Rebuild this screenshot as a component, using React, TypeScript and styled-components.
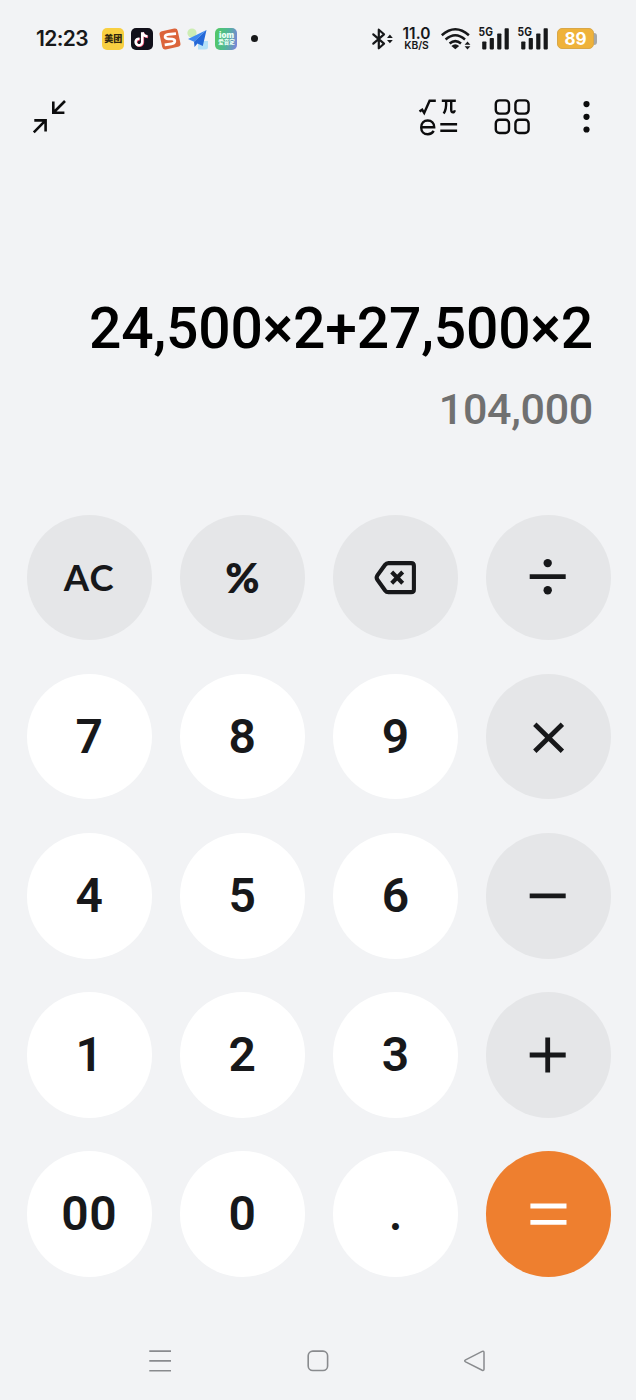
import React from "react";
import styled, { createGlobalStyle } from "styled-components";

const GlobalStyle = createGlobalStyle`
  * { box-sizing: border-box; }
  body { margin: 0; background: #f2f3f5; }
  svg { display: block; flex: none; overflow: visible; }
`;

const Screen = styled.main`
  width: 636px;
  height: 1400px;
  display: flex;
  flex-direction: column;
  background: #f2f3f5;
  color: #17181a;
  font-family: Roboto, "Noto Sans CJK SC", sans-serif;
  overflow: hidden;
`;

const StatusBar = styled.header`
  height: 77px;
  display: flex;
  align-items: center;
  justify-content: space-between;
  padding: 0 39px 0 36px;
`;

const StatusGroup = styled.div<{ $gap: number }>`
  display: flex;
  align-items: center;
  gap: ${(p) => p.$gap}px;
`;

const Clock = styled.span`
  width: 60px;
  font: 600 21px/24px Inter, sans-serif;
  letter-spacing: -0.6px;
  white-space: nowrap;
`;

const AppBadge = styled.span<{ $bg: string }>`
  width: 22px;
  height: 22px;
  border-radius: 5px;
  background: ${(p) => p.$bg};
  display: flex;
  flex-direction: column;
  align-items: center;
  justify-content: center;
`;

const BadgeText = styled.span<{ $size: number; $line: number; $color: string }>`
  font: 900 ${(p) => p.$size}px/${(p) => p.$line}px Inter, "Noto Sans CJK SC", sans-serif;
  color: ${(p) => p.$color};
  white-space: nowrap;
`;

const NoticeDot = styled.span`
  width: 7px;
  height: 7px;
  margin-left: 7px;
  border-radius: 50%;
  background: #17181a;
`;

const NetSpeed = styled.div`
  width: 29px;
  margin: 0 10px 0 9px;
  display: flex;
  flex-direction: column;
  align-items: center;
  white-space: nowrap;
`;

const SpeedValue = styled.span`
  font: 600 15.5px/12px Inter, sans-serif;
  letter-spacing: 0.1px;
`;

const SpeedUnit = styled.span`
  margin-top: 1px;
  font: 600 10.3px/9px Inter, sans-serif;
`;

const SignalWrap = styled.div`
  margin-left: 9px;
`;

const Battery = styled.div`
  margin-left: 9px;
  display: flex;
  align-items: center;
`;

const BatteryBody = styled.div`
  width: 37px;
  height: 21px;
  border-radius: 5px;
  border: 1px solid #d9a748;
  background: #efb23a;
  color: #fff;
  font: 700 17px/21px Inter, sans-serif;
  text-align: center;
`;

const BatteryTip = styled.div`
  width: 3px;
  height: 12px;
  border-radius: 0 4px 4px 0;
  background: #a6a8a8;
`;

const Toolbar = styled.nav`
  height: 80px;
  display: flex;
  align-items: center;
  padding: 0 44px 0 32px;
`;

const ToolButton = styled.button<{ $left?: string }>`
  padding: 0;
  border: 0;
  background: none;
  color: #0c0c0d;
  margin-left: ${(p) => p.$left ?? "0"};
`;

const Display = styled.section`
  height: 358px;
  padding: 137px 43px 0 0;
  display: flex;
  flex-direction: column;
  align-items: flex-end;
  white-space: nowrap;
`;

const Expression = styled.div`
  font-size: 57px;
  font-weight: 500;
  line-height: 70px;
  letter-spacing: -0.15px;
  color: #000;
`;

const Result = styled.div`
  margin-top: 20px;
  font-size: 43px;
  font-weight: 500;
  line-height: 50px;
  letter-spacing: -0.3px;
  color: #707070;
`;

const Keypad = styled.section`
  display: grid;
  grid-template-columns: repeat(4, 125.4px);
  grid-auto-rows: 125.4px;
  column-gap: 27.7px;
  row-gap: 33.7px;
  padding-left: 26.5px;
`;

type Tone = "digit" | "op" | "equals";
const toneFill: Record<Tone, string> = { digit: "#ffffff", op: "#e5e6e8", equals: "#ee7f2f" };

const Key = styled.button<{ $tone: Tone; $face?: string; $size?: number; $weight?: number; $spacing?: number; $lift?: number }>`
  border: 0;
  border-radius: 50%;
  padding: 0 0 ${(p) => p.$lift ?? 0}px;
  display: flex;
  align-items: center;
  justify-content: center;
  background: ${(p) => toneFill[p.$tone]};
  color: ${(p) => (p.$tone === "equals" ? "#fff" : "#17181a")};
  font-family: ${(p) => p.$face ?? "Roboto"}, sans-serif;
  font-size: ${(p) => p.$size ?? 48}px;
  font-weight: ${(p) => p.$weight ?? 600};
  letter-spacing: ${(p) => p.$spacing ?? 0}px;
  line-height: 1;
`;

const NavBar = styled.footer`
  margin-top: 72px;
  display: flex;
  align-items: center;
  justify-content: space-between;
  padding: 0 150px 0 148px;
  color: #898b8e;
`;

const BluetoothIcon = () => (
  <svg width="21" height="22" viewBox="372 27.5 21 22" fill="none" stroke="#17181a">
    <path d="M373.3 33.8 384 43.2 378.8 47.8V29.2L384 33.8 373.3 43.2" strokeWidth="2.2" strokeLinejoin="round" strokeLinecap="round" />
    <path d="M387 37.4 389.9 34 392.8 37.4ZM387 39.4 389.9 42.8 392.8 39.4Z" fill="#17181a" stroke="none" />
  </svg>
);

const WifiIcon = () => (
  <svg width="29" height="22" viewBox="441 27.5 29 22" fill="none" stroke="#17181a" strokeWidth="2.5">
    <path d="M441.8 34.8Q455.3 22.8 468.9 34.8M445.6 39Q455.3 30.6 465 39M449.6 43Q455.3 38.2 461 43" />
    <path d="M451.4 45.4Q455.3 42 459.2 45.4L455.3 48.8Z" fill="#17181a" stroke="none" />
    <path d="M464.6 44.2 467.5 41 470.4 44.2ZM464.6 45.8 467.5 49 470.4 45.8Z" fill="#17181a" stroke="none" />
  </svg>
);

const SignalIcon = () => (
  <SignalWrap>
    <svg width="30" height="22" viewBox="0 0 30 22" fill="#17181a">
      <text x="-0.4" y="8.4" fontFamily="Inter" fontSize="11.4" fontWeight="700" textLength="14.2" lengthAdjust="spacingAndGlyphs">5G</text>
      <rect x="3.2" y="13.4" width="4.2" height="8" rx="0.8" />
      <rect x="10.7" y="10" width="4.2" height="11.4" rx="0.8" />
      <rect x="18.2" y="5.4" width="4.2" height="16" rx="0.8" />
      <rect x="25.6" y="0.3" width="4.2" height="21.1" rx="0.8" />
    </svg>
  </SignalWrap>
);

const NoteIcon = () => (
  <svg width="22" height="22" viewBox="0 0 22 22" fill="none" strokeWidth="2.5">
    <path d="M11.2 4.2V13.9A3.3 3.3 0 1 1 8.4 10.7M11.5 4.2Q12.2 8 16.4 8.3" stroke="#e9476a" transform="translate(.7 .6)" />
    <path d="M11.2 4.2V13.9A3.3 3.3 0 1 1 8.4 10.7M11.5 4.2Q12.2 8 16.4 8.3" stroke="#fff" />
  </svg>
);

const SIcon = () => (
  <svg width="22" height="22" viewBox="0 0 22 22">
    <rect x="1.7" y="1.7" width="18.6" height="18.6" rx="3" fill="#dc643b" transform="rotate(-12 11 11)" />
    <path d="M17 5.6 9.4 6.3Q5.6 7 6.1 9.2 6.7 10.8 9.2 10.8L13.2 11Q16.1 11.4 15.8 13.7 15.2 15.6 12.5 15.9L5.7 16.8" fill="none" stroke="#fff" strokeWidth="2.7" />
  </svg>
);

const PlaneIcon = () => (
  <svg width="22" height="22" viewBox="0 0 22 22">
    <circle cx="5" cy="5" r="4.6" fill="#cdedb4" />
    <path d="M11 13H21V19Q21 21.5 18 21.5H11Z" fill="#b5e1f8" />
    <path d="M19.5 2 1 11 7 13.8Z" fill="#3f8af0" />
    <path d="M19.5 2 7 13.8 7.5 19 10.5 15.4 15.8 18Z" fill="#2468d8" />
  </svg>
);

const CollapseIcon = () => (
  <svg width="36" height="36" viewBox="32 99 36 36" fill="none" stroke="currentColor" strokeWidth="2.6">
    <path d="M53.3 101.6V112.8H64.4M53.6 112.5 65 101M34.3 120.4H45.6V131.6M45.3 120.7 33.8 132.3" />
  </svg>
);

const ScientificIcon = () => (
  <svg width="40" height="38" viewBox="419 98 40 38" fill="none" stroke="currentColor" strokeWidth="2.4">
    <path d="M419.5 111.6 422.2 109.7 424.2 113 429.6 100.7H435.8" />
    <path d="M441.8 100.7H455.8M446.1 101Q446.6 109.8 443.6 113.4M451.2 101V109.6Q451.2 112.4 453 112.4 454.3 112.4 454.8 110.2" />
    <path d="M421.3 127.2H434.2C434.2 123.2 431.5 120.5 427.7 120.5S421.2 123.3 421.2 127.4 423.8 134.3 427.8 134.3Q431.8 134.3 433.7 130.9" />
    <path d="M440.3 124.2H457.1M440.3 130.8H457.1" />
  </svg>
);

const GridIcon = () => (
  <svg width="36" height="36" viewBox="494 98.7 36 36" fill="none" stroke="currentColor" strokeWidth="2.4">
    {[495.8, 515.4].map((x) =>
      [100.1, 119.5].map((y) => <rect key={`${x}-${y}`} x={x} y={y} width="13.2" height="13.2" rx="3.6" />)
    )}
  </svg>
);

const MoreIcon = () => (
  <svg width="11" height="36" viewBox="581 98.9 11 36" fill="currentColor">
    <circle cx="586.5" cy="104" r="3.1" />
    <circle cx="586.5" cy="116.7" r="3.1" />
    <circle cx="586.5" cy="129.4" r="3.1" />
  </svg>
);

const OpSvg = ({ children }: { children: React.ReactNode }) => (
  <svg width="44" height="44" viewBox="-22.6 -22 44 44" fill="none" stroke="currentColor" strokeWidth="4.8">
    {children}
  </svg>
);

const BackspaceIcon = () => (
  <OpSvg>
    <path d="M-7.2-14.9H15.6Q18.3-14.9 18.3-12.2V11.4Q18.3 14.1 15.6 14.1H-7.2Q-9.2 14.1-10.5 12.4L-18.2 1.8Q-19.7-.4-18.2-2.6L-10.5-13.2Q-9.2-14.9-7.2-14.9Z" strokeWidth="4.1" />
    <path d="M-3.9-6 7.1 5.2M7.1-6-3.9 5.2" strokeWidth="4.1" />
  </OpSvg>
);

const DivideIcon = () => (
  <OpSvg>
    <path d="M-18.9-1.4H17.1" />
    <circle cx="-.9" cy="-14.9" r="4.2" fill="currentColor" stroke="none" />
    <circle cx="-.9" cy="12.2" r="4.2" fill="currentColor" stroke="none" />
  </OpSvg>
);

const MultiplyIcon = () => <OpSvg><path d="M-13.8-12.8 13.8 14.2M13.8-12.8-13.8 14.2" /></OpSvg>;
const MinusIcon = () => <OpSvg><path d="M-18.9-.2H17.1" /></OpSvg>;
const PlusIcon = () => <OpSvg><path d="M-18.9 0H17.1M-.9-17.5V17.5" /></OpSvg>;
const EqualsIcon = () => <OpSvg><path d="M-18.2-8H17.9M-18.2 8.3H17.9" /></OpSvg>;

export default function App() {
  const digit = (d: string) => (
    <Key $tone="digit" $spacing={d.length > 1 ? 0.6 : 0}>{d}</Key>
  );
  return (
    <>
      <GlobalStyle />
      <Screen>
        <StatusBar>
          <StatusGroup $gap={6.3}>
            <Clock>12:23</Clock>
            <AppBadge $bg="#f8cf41"><BadgeText $size={9} $line={12} $color="#30260f">美团</BadgeText></AppBadge>
            <AppBadge $bg="#11101a"><NoteIcon /></AppBadge>
            <SIcon />
            <PlaneIcon />
            <AppBadge $bg="linear-gradient(100deg, #52c66d 15%, #4fb894 50%, #7d7fe0)">
              <BadgeText $size={8} $line={8} $color="#e9fff4">iom</BadgeText>
              <BadgeText $size={5.5} $line={7} $color="#e9fff4">爱音定</BadgeText>
            </AppBadge>
            <NoticeDot />
          </StatusGroup>
          <StatusGroup $gap={0}>
            <BluetoothIcon />
            <NetSpeed>
              <SpeedValue>11.0</SpeedValue>
              <SpeedUnit>KB/S</SpeedUnit>
            </NetSpeed>
            <WifiIcon />
            <SignalIcon />
            <SignalIcon />
            <Battery>
              <BatteryBody>89</BatteryBody>
              <BatteryTip />
            </Battery>
          </StatusGroup>
        </StatusBar>
        <Toolbar>
          <ToolButton aria-label="Collapse"><CollapseIcon /></ToolButton>
          <ToolButton $left="auto" aria-label="Scientific"><ScientificIcon /></ToolButton>
          <ToolButton $left="35px" aria-label="Tools"><GridIcon /></ToolButton>
          <ToolButton $left="51px" aria-label="More"><MoreIcon /></ToolButton>
        </Toolbar>
        <Display>
          <Expression>24,500×2+27,500×2</Expression>
          <Result>104,000</Result>
        </Display>
        <Keypad>
          <Key $tone="op" $face="Lato" $weight={700} $size={36.5} $spacing={1}>AC</Key>
          <Key $tone="op" $face="Lato" $weight={800} $size={41}>%</Key>
          <Key $tone="op" aria-label="Backspace"><BackspaceIcon /></Key>
          <Key $tone="op" aria-label="Divide"><DivideIcon /></Key>
          {digit("7")}{digit("8")}{digit("9")}
          <Key $tone="op" aria-label="Multiply"><MultiplyIcon /></Key>
          {digit("4")}{digit("5")}{digit("6")}
          <Key $tone="op" aria-label="Minus"><MinusIcon /></Key>
          {digit("1")}{digit("2")}{digit("3")}
          <Key $tone="op" aria-label="Plus"><PlusIcon /></Key>
          {digit("00")}{digit("0")}
          <Key $tone="digit" $face="Lato" $weight={700} $size={46} $lift={2}>.</Key>
          <Key $tone="equals" aria-label="Equals"><EqualsIcon /></Key>
        </Keypad>
        <NavBar>
          <svg width="24" height="24" viewBox="0 0 24 24" fill="none" stroke="currentColor" strokeWidth="1.6">
            <path d="M1.3 2.1H23M1.3 11.9H23M1.3 21.8H23" />
          </svg>
          <svg width="24" height="24" viewBox="-1 0 24 24" fill="none" stroke="currentColor" strokeWidth="1.6">
            <rect x="2.2" y="2.1" width="19.4" height="19.4" rx="4.6" />
          </svg>
          <svg width="24" height="24" viewBox="0 0 24 24" fill="none" stroke="currentColor" strokeWidth="1.5">
            <path d="M3.6 10.8 20.2 2.4Q22 1.7 22 3.6V20Q22 21.9 20.2 21.2L3.6 12.8Q1.8 11.8 3.6 10.8Z" />
          </svg>
        </NavBar>
      </Screen>
    </>
  );
}
